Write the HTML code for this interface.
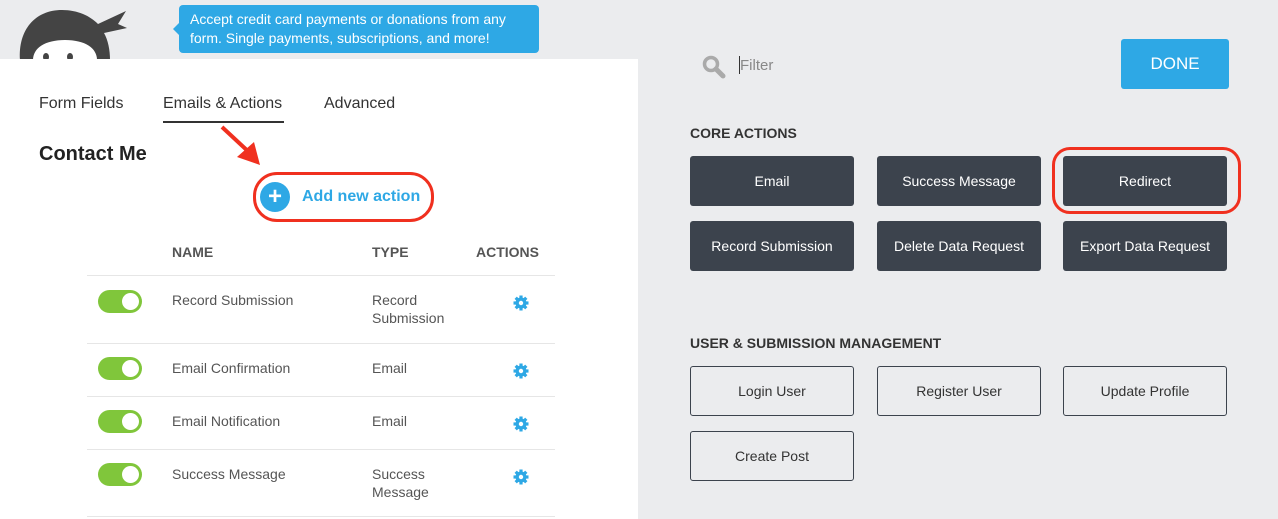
<!DOCTYPE html>
<html><head><meta charset="utf-8"><style>
*{margin:0;padding:0;box-sizing:border-box}
body{width:1278px;height:519px;overflow:hidden;background:#ebecee;font-family:"Liberation Sans",sans-serif;position:relative}
.a{position:absolute}
.left{left:0;top:59px;width:638px;height:460px;background:#fff}
.tip{left:179px;top:5px;width:360px;height:48px;background:#2ea8e5;border-radius:4px;color:#fff;font-size:14px;line-height:19px;padding:5px 11px}
.tip:before{content:"";position:absolute;left:-6px;top:18px;border-right:6px solid #2ea8e5;border-top:6px solid transparent;border-bottom:6px solid transparent}
.tab{font-size:16px;color:#333;top:95px}
.hd{font-size:14px;font-weight:bold;color:#555;top:244px}
.line{left:87px;width:468px;height:1px;background:#e6e6e6}
.tg{left:98px;width:44px;height:23px;background:#80c63b;border-radius:12px}
.tg:after{content:"";position:absolute;right:3px;top:3px;width:17px;height:17px;border-radius:50%;background:#fff}
.t{font-size:14px;color:#555;line-height:18px}
.btn{width:164px;height:50px;border-radius:3px;background:#3c434d;color:#fff;font-size:14px;display:flex;align-items:center;justify-content:center}
.ob{width:164px;height:50px;border-radius:3px;border:1px solid #3c434d;color:#333;font-size:14px;display:flex;align-items:center;justify-content:center}
.sec{font-size:14px;font-weight:bold;color:#333}
.gear{width:16px;height:16px}
</style></head><body>
<svg class="a" style="left:0;top:0" width="140" height="60" viewBox="0 0 140 60">
<path d="M20 60 C18 30 35 10 62 10 C78 10 90 16 98 24 L126 11 L118 24 L127 28 L104 33 C108 40 110 50 110 60 Z" fill="#444"/>
<path d="M33 60 C33 48 45 40 65 40 C85 40 97 48 97 60 Z" fill="#fff"/>
<ellipse cx="46" cy="57" rx="3" ry="4" fill="#444"/><ellipse cx="70" cy="57" rx="3" ry="4" fill="#444"/>
</svg>
<div class="a tip">Accept credit card payments or donations from any form. Single payments, subscriptions, and more!</div>
<div class="a left"></div>
<div class="a tab" style="left:39px">Form Fields</div>
<div class="a tab" style="left:163px">Emails &amp; Actions</div>
<div class="a" style="left:163px;top:121px;width:121px;height:2px;background:#333"></div>
<div class="a tab" style="left:324px">Advanced</div>
<div class="a" style="left:39px;top:143px;font-size:20px;font-weight:bold;color:#222">Contact Me</div>
<svg class="a" style="left:215px;top:120px" width="60" height="55"><line x1="7" y1="7" x2="36" y2="34" stroke="#f0301f" stroke-width="4"/><polygon points="45,45 22,37 39,22" fill="#f0301f"/></svg>
<div class="a" style="left:253px;top:172px;width:181px;height:50px;border:3px solid #f0301f;border-radius:24px"></div>
<div class="a" style="left:260px;top:182px;width:30px;height:30px;border-radius:50%;background:#2ea8e5;color:#fff;font-size:24px;font-weight:bold;text-align:center;line-height:30px">+</div>
<div class="a" style="left:302px;top:188px;font-size:16px;font-weight:bold;color:#2ea8e5">Add new action</div>
<div class="a hd" style="left:172px">NAME</div>
<div class="a hd" style="left:372px">TYPE</div>
<div class="a hd" style="left:476px">ACTIONS</div>
<div class="a line" style="top:275px"></div>
<div class="a line" style="top:343px"></div>
<div class="a line" style="top:396px"></div>
<div class="a line" style="top:449px"></div>
<div class="a line" style="top:516px"></div>
<div class="a tg" style="top:290px"></div><div class="a tg" style="top:357px"></div><div class="a tg" style="top:410px"></div><div class="a tg" style="top:463px"></div>
<div class="a t" style="left:172px;top:291px">Record Submission</div><div class="a t" style="left:372px;top:291px">Record<br>Submission</div>
<div class="a t" style="left:172px;top:359px">Email Confirmation</div><div class="a t" style="left:372px;top:359px">Email</div>
<div class="a t" style="left:172px;top:412px">Email Notification</div><div class="a t" style="left:372px;top:412px">Email</div>
<div class="a t" style="left:172px;top:465px">Success Message</div><div class="a t" style="left:372px;top:465px">Success<br>Message</div>
<svg width="0" height="0" style="position:absolute"><defs><g id="g"><circle cx="8" cy="8" r="5.5" fill="#2ea8e5"/><g stroke="#2ea8e5" stroke-width="3.2"><line x1="8" y1="0.5" x2="8" y2="15.5"/><line x1="0.5" y1="8" x2="15.5" y2="8"/><line x1="2.7" y1="2.7" x2="13.3" y2="13.3"/><line x1="13.3" y1="2.7" x2="2.7" y2="13.3"/></g><circle cx="8" cy="8" r="2.2" fill="#fff"/></g></defs></svg>
<svg class="a gear" style="left:513px;top:295px"><use href="#g"/></svg>
<svg class="a gear" style="left:513px;top:363px"><use href="#g"/></svg>
<svg class="a gear" style="left:513px;top:416px"><use href="#g"/></svg>
<svg class="a gear" style="left:513px;top:469px"><use href="#g"/></svg>
<svg class="a" style="left:700px;top:53px" width="28" height="28"><circle cx="11" cy="11" r="6.5" fill="none" stroke="#aaa" stroke-width="3.5"/><line x1="16" y1="16" x2="23" y2="23" stroke="#aaa" stroke-width="5" stroke-linecap="round"/></svg>
<div class="a" style="left:739px;top:56px;width:1px;height:18px;background:#333"></div>
<div class="a" style="left:740px;top:57px;font-size:15px;color:#888">Filter</div>
<div class="a" style="left:1121px;top:39px;width:108px;height:50px;background:#2ea8e5;border-radius:3px;color:#fff;font-size:17px;display:flex;align-items:center;justify-content:center">DONE</div>
<div class="a sec" style="left:690px;top:125px">CORE ACTIONS</div>
<div class="a btn" style="left:690px;top:156px">Email</div>
<div class="a btn" style="left:877px;top:156px">Success Message</div>
<div class="a btn" style="left:1063px;top:156px">Redirect</div>
<div class="a" style="left:1052px;top:147px;width:189px;height:67px;border:3px solid #f0301f;border-radius:18px"></div>
<div class="a btn" style="left:690px;top:221px">Record Submission</div>
<div class="a btn" style="left:877px;top:221px">Delete Data Request</div>
<div class="a btn" style="left:1063px;top:221px">Export Data Request</div>
<div class="a sec" style="left:690px;top:335px">USER &amp; SUBMISSION MANAGEMENT</div>
<div class="a ob" style="left:690px;top:366px">Login User</div>
<div class="a ob" style="left:877px;top:366px">Register User</div>
<div class="a ob" style="left:1063px;top:366px">Update Profile</div>
<div class="a ob" style="left:690px;top:431px">Create Post</div>
</body></html>
